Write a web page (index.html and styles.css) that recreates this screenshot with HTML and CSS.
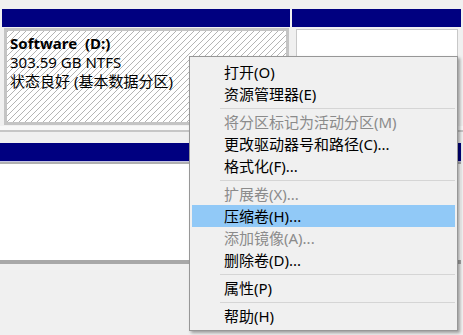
FILE: index.html
```html
<!DOCTYPE html>
<html lang="zh-CN">
<head>
<meta charset="utf-8">
<title>磁盘管理</title>
<link rel="stylesheet" href="styles.css">
</head>
<body>
<div class="disks">
  <div class="disk-row">
    <div class="vol vol-main">
      <div class="vol-head"></div>
      <div class="vol-box hatched">
        <div class="vol-name">Software&nbsp; (D:)</div>
        <div>303.59 GB NTFS</div>
        <div>状态良好 (基本数据分区)</div>
      </div>
    </div>
    <div class="vol vol-free">
      <div class="vol-head"></div>
      <div class="vol-box plain"></div>
    </div>
  </div>
  <div class="row-sep"></div>
  <div class="disk2">
    <div class="vol-head"></div>
    <div class="disk2-box"></div>
  </div>
</div>

<ul class="menu">
  <li class="item">打开(O)</li>
  <li class="item">资源管理器(E)</li>
  <li class="sep"></li>
  <li class="item disabled">将分区标记为活动分区(M)</li>
  <li class="item">更改驱动器号和路径(C)...</li>
  <li class="item">格式化(F)...</li>
  <li class="sep"></li>
  <li class="item disabled">扩展卷(X)...</li>
  <li class="item active">压缩卷(H)...</li>
  <li class="item disabled">添加镜像(A)...</li>
  <li class="item">删除卷(D)...</li>
  <li class="sep"></li>
  <li class="item">属性(P)</li>
  <li class="sep"></li>
  <li class="item">帮助(H)</li>
</ul>
</body>
</html>
```

FILE: styles.css
```css
* { box-sizing: border-box; }

html, body {
  margin: 0;
  padding: 0;
  width: 463px;
  height: 335px;
  overflow: hidden;
  background: #f0f0f0;
  font-family: "Noto Sans", "Noto Sans CJK SC", sans-serif;
  font-size: 15px;
  color: #000;
}

.disk-row {
  display: flex;
  gap: 2px;
  padding: 9px 2px 0 2px;
}

.vol { display: flex; flex-direction: column; }
.vol-main { width: 288px; flex: none; }
.vol-free { width: 169px; flex: none; }

.vol-head {
  height: 18px;
  background: #000080;
}

.vol-box {
  height: 97px;
  margin: 1px 1px 0 2px;
}

.hatched {
  border: 3px solid #c4c4c4;
  padding: 3px 3px;
  line-height: 19px;
  background: #fff repeating-linear-gradient(135deg, #b4b4b4 0 1px, #ffffff 1px 4.25px);
}

.vol-name { font-weight: bold; }

.plain {
  margin: 2px 3px 0 4px;
  border: 1px solid #c8c8c8;
  background: #fff;
}

.row-sep {
  height: 6px;
  background: #f8f8f8;
  border-bottom: 2px solid #c6c6c6;
  margin-bottom: 11px;
}

.disk2 { padding-right: 2px; }

.disk2-box {
  height: 103px;
  border-top: 1px solid #c4c4e4;
  box-shadow: inset 0 2px 0 #b0b0b0;
  border-bottom: 4px solid #a8a8a8;
  background: #fff;
}

.menu {
  position: absolute;
  left: 189px;
  top: 56px;
  width: 269px;
  margin: 0;
  padding: 4px 2px 3px 2px;
  list-style: none;
  background: #f0f0f0;
  border: 1px solid #979797;
  box-shadow: 2px 2px 3px rgba(0, 0, 0, 0.35);
}

.item {
  height: 22px;
  line-height: 22px;
  padding-left: 32px;
  white-space: nowrap;
}

.item.disabled { color: #8b8b8b; }
.item.active { background: #91c9f7; }

.sep {
  height: 1px;
  margin: 3px 0 2px 28px;
  background: #d5d5d5;
}
```
